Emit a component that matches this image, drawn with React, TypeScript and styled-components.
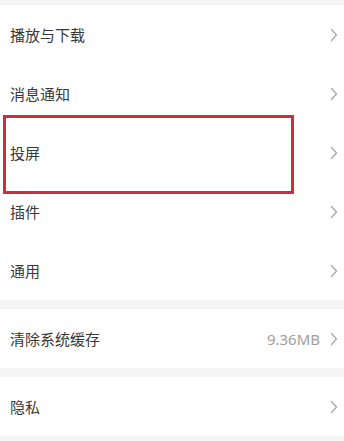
import React from "react";
import styled, { createGlobalStyle } from "styled-components";

const GlobalStyle = createGlobalStyle`
  html, body {
    margin: 0;
    padding: 0;
    background: #f5f5f5;
  }
  body {
    font-family: "Noto Sans CJK SC", "Noto Sans", sans-serif;
  }
`;

interface Item {
  label: string;
  value?: string;
  highlight?: boolean;
}

const groups: Item[][] = [
  [
    { label: "播放与下载" },
    { label: "消息通知" },
    { label: "投屏", highlight: true },
    { label: "插件" },
    { label: "通用" },
  ],
  [{ label: "清除系统缓存", value: "9.36MB" }],
  [{ label: "隐私" }],
];

function Chevron() {
  return (
    <svg width="8" height="14" viewBox="0 0 8 14" fill="none">
      <path d="M1.5 1.5L6.5 7L1.5 12.5" stroke="#a3a3a3" strokeWidth="1.2" strokeLinecap="round" strokeLinejoin="round" />
    </svg>
  );
}

function App() {
  return (
    <>
      <GlobalStyle />
      <Page>
        {groups.map((group, gi) => (
          <Group key={gi}>
            {group.map((item) => (
              <Row key={item.label}>
                <Label>{item.label}</Label>
                <Right>
                  {item.value && <Value>{item.value}</Value>}
                  <Chevron />
                </Right>
                {item.highlight && <Highlight />}
              </Row>
            ))}
          </Group>
        ))}
      </Page>
    </>
  );
}

const Page = styled.div`
  display: flex;
  flex-direction: column;
  gap: 9px;
  padding-top: 5px;
  min-height: 441px;
  box-sizing: border-box;
  background: #f5f5f5;
`;

const Group = styled.div`
  background: #ffffff;
  display: flex;
  flex-direction: column;
`;

const Row = styled.div`
  position: relative;
  height: 59px;
  display: flex;
  align-items: center;
  justify-content: space-between;
  padding: 0 6px 0 10px;
`;

const Label = styled.span`
  font-size: 15px;
  color: #383838;
`;

const Right = styled.div`
  display: flex;
  align-items: center;
  gap: 10px;
`;

const Value = styled.span`
  font-family: "Noto Sans", "Noto Sans CJK SC", sans-serif;
  font-size: 15px;
  color: #9e9e9e;
`;

const Highlight = styled.div`
  position: absolute;
  left: 3px;
  top: -8px;
  width: 291px;
  height: 79px;
  box-sizing: border-box;
  border: 3px solid #c0343e;
  pointer-events: none;
`;

export default App;
